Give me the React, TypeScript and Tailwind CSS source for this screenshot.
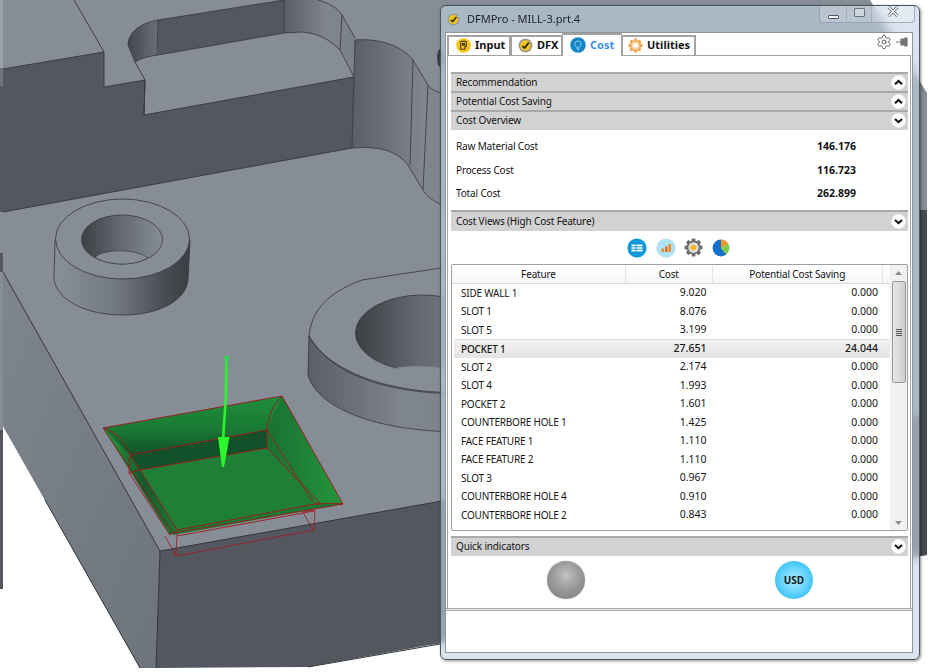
import React from "react";
import { Settings } from "lucide-react";

const rows: [string, string, string][] = [
  ["SIDE WALL 1", "9.020", "0.000"],
  ["SLOT 1", "8.076", "0.000"],
  ["SLOT 5", "3.199", "0.000"],
  ["POCKET 1", "27.651", "24.044"],
  ["SLOT 2", "2.174", "0.000"],
  ["SLOT 4", "1.993", "0.000"],
  ["POCKET 2", "1.601", "0.000"],
  ["COUNTERBORE HOLE 1", "1.425", "0.000"],
  ["FACE FEATURE 1", "1.110", "0.000"],
  ["FACE FEATURE 2", "1.110", "0.000"],
  ["SLOT 3", "0.967", "0.000"],
  ["COUNTERBORE HOLE 4", "0.910", "0.000"],
  ["COUNTERBORE HOLE 2", "0.843", "0.000"],
];

const RED = "#a3161c";
const EDGE = "#33373c";
const TOP = "#868d96";
const WALL = "#53575e";

function CadScene() {
  return (
    <svg className="absolute left-0 top-0 blur-[0.4px]" width={936} height={672} viewBox="0 0 936 672">
      <defs>
        <linearGradient id="cylA" x1="0" x2="1" y1="0" y2="0">
          <stop offset="0" stopColor="#8a9098" />
          <stop offset="0.45" stopColor="#737981" />
          <stop offset="0.8" stopColor="#4a4e54" />
          <stop offset="1" stopColor="#3a3d42" />
        </linearGradient>
        <linearGradient id="holeA" x1="0" x2="1" y1="0" y2="0">
          <stop offset="0" stopColor="#3c3f44" />
          <stop offset="0.45" stopColor="#62676e" />
          <stop offset="1" stopColor="#868d96" />
        </linearGradient>
        <linearGradient id="sl1" x1="0" x2="1" y1="0" y2="0">
          <stop offset="0" stopColor="#43464c" />
          <stop offset="1" stopColor="#6b7077" />
        </linearGradient>
        <linearGradient id="sl2" x1="0" x2="1" y1="0" y2="0">
          <stop offset="0" stopColor="#5a5e65" />
          <stop offset="0.6" stopColor="#80868e" />
          <stop offset="1" stopColor="#7b8189" />
        </linearGradient>
        <linearGradient id="leftF" x1="0" x2="1" y1="0" y2="1">
          <stop offset="0" stopColor="#7f858d" />
          <stop offset="1" stopColor="#6e747c" />
        </linearGradient>
        <linearGradient id="gTop" x1="0" x2="0" y1="0" y2="1">
          <stop offset="0" stopColor="#1f8e3a" />
          <stop offset="0.55" stopColor="#1a7a33" />
          <stop offset="1" stopColor="#125029" />
        </linearGradient>
        <linearGradient id="gLeft" x1="0" x2="1" y1="0" y2="0">
          <stop offset="0" stopColor="#2a9a42" />
          <stop offset="0.55" stopColor="#135a2b" />
          <stop offset="1" stopColor="#1a7a33" />
        </linearGradient>
        <linearGradient id="gRight" x1="0" x2="1" y1="0" y2="0">
          <stop offset="0" stopColor="#187032" />
          <stop offset="1" stopColor="#25953c" />
        </linearGradient>
      </defs>

      {/* body */}
      <polygon points="3,0 870,0 927,93 927,555 440,644 156,668 140,668 3,426" fill={TOP} />
      <polygon points="3,272 160,551 156,668 140,668 45,500 3,426" fill="url(#leftF)" />
      <polygon points="160,551 927,415 927,555 308,667 156,668" fill={WALL} />
      <path d="M3,272 L160,551 M160,551 L927,415 M160,551 L156,668 M45,500 L140,668 M308,667 L440,644" stroke={EDGE} strokeWidth="1" fill="none" />
      <rect x="0" y="0" width="3" height="68" fill="#9aa0a8" />
      <rect x="0" y="68" width="3" height="18" fill="#6f747b" />
      <rect x="0" y="86" width="3" height="126" fill={WALL} />
      <rect x="0" y="212" width="3" height="41" fill={TOP} />
      <rect x="0" y="253" width="3" height="19" fill={WALL} />
      <rect x="0" y="272" width="3" height="158" fill={TOP} />
      <rect x="0" y="430" width="3" height="159" fill={WALL} />
      <rect x="920" y="210" width="7" height="345" fill="#474b51" />

      {/* upper walls */}
      <polygon points="3,69 104,52 104,87 145,80 144,115 354,77 352,148 3,212" fill={WALL} />
      <path d="M3,69 L104,52 L104,87 L145,80 L144,115 L354,77 M3,212 L352,148 M74,0 L104,52 M145,80 L144,115 M145,80 L135,62" stroke={EDGE} strokeWidth="0.9" fill="none" />

      {/* slot */}
      <polygon points="158,20 284,0 284,33 158,55" fill={WALL} />
      <path d="M158,20 C140,23 128,33 128,45 L135,62 C141,58 150,56 158,55 Z" fill="url(#sl1)" />
      <path d="M284,0 L318,0 C330,3 338,9 342,15 L355,38 L354,77 L340,50 C330,40 318,33 302,32 L284,33 Z" fill="url(#sl2)" />
      <path d="M158,20 L284,0 M158,55 L284,33 M158,20 L157,55 M284,0 L284,33 M158,20 C140,23 128,33 128,45 L135,62 C141,58 150,56 158,55 M284,33 L302,32 C318,33 330,40 340,50 L354,77 M318,0 C330,3 338,9 342,15 L355,38 M342,15 L340,50" stroke={EDGE} strokeWidth="0.8" fill="none" />

      {/* big fillet wall */}
      <path d="M355,40 C380,38 402,46 413,60 L428,85 C432,90 436,93 470,100 L470,215 C436,205 428,198 423,190 L408,165 C396,150 378,146 352,148 Z" fill="url(#sl2)" />
      <path d="M355,40 L352,148 M355,40 C380,38 402,46 413,60 L428,85 C432,90 436,93 470,100 M352,148 C378,146 396,150 408,165 L423,190 C428,198 436,205 470,215 M413,60 L410,165 M428,85 L423,190" stroke={EDGE} strokeWidth="0.8" fill="none" />
      <ellipse cx="440" cy="58" rx="3" ry="9" fill="#3a3d42" />

      {/* boss 1 */}
      <path d="M55,240 L54,280 C58,300 85,315 123,315 C160,315 186,300 188,280 L190,240 Z" fill="url(#cylA)" stroke={EDGE} strokeWidth="0.8" />
      <ellipse cx="122.5" cy="239" rx="67" ry="40" fill={TOP} stroke={EDGE} strokeWidth="0.8" />
      <ellipse cx="122" cy="239.5" rx="40.5" ry="24.5" fill="url(#holeA)" stroke={EDGE} strokeWidth="0.8" />
      <path d="M95,257 C105,249 135,248 148,258 C138,263 130,264 122,264 C112,264 102,262 95,257 Z" fill={TOP} stroke={EDGE} strokeWidth="0.6" />

      {/* boss 2 */}
      <path d="M309,336 L308,375 C316,405 370,433 470,432 L470,392 C400,396 330,375 309,336 Z" fill="url(#sl2)" stroke={EDGE} strokeWidth="0.8" />
      <path d="M309,336 C312,305 335,290 362,280 L480,262" fill="none" stroke={EDGE} strokeWidth="0.8" />
      <path d="M309,336 C330,372 380,396 480,394" fill="none" stroke={EDGE} strokeWidth="0.8" />
      <ellipse cx="422" cy="333" rx="66.5" ry="38" fill="url(#holeA)" stroke={EDGE} strokeWidth="0.8" />
      <path d="M395,368 C410,365 430,366 460,370 C440,374 415,374 395,368 Z" fill={TOP} />

      {/* pocket */}
      <polygon points="103,428 282,396 343,504 173,535" fill="#1a7a33" />
      <polygon points="103,428 282,396 267,430 130,455" fill="url(#gTop)" />
      <polygon points="130,455 267,430 267,448 140,470" fill="#12502a" />
      <polygon points="140,470 267,448 320,503 177,530" fill="#1f7f36" />
      <polygon points="282,396 343,504 320,503 267,448 267,430" fill="url(#gRight)" />
      <polygon points="103,428 130,455 140,470 177,530 170,535" fill="url(#gLeft)" />
      <path
        d="M103,428 L282,396 L343,504 L173,533 L103,428 M103,428 C116,432 126,442 130,455 L267,430 C268,415 274,404 282,396 M130,455 L140,470 L267,448 L267,430 M140,470 L177,530 M130,455 L129,473 L140,470 M129,473 L170,535 M267,448 L320,503 M267,430 L313,502 M343,504 C332,503 322,503 316,505 M177,530 L320,503 M177,536 L314,511"
        fill="none"
        stroke={RED}
        strokeWidth="0.9"
      />
      <path
        d="M165,536 L176,556 L314,530 L315,510 L303,512 L313,530 M176,556 L177,532 M170,535 L177,530"
        fill="none"
        stroke={RED}
        strokeWidth="0.8"
      />
      <path d="M226.5,358 L226,395 L223,440" fill="none" stroke="#2bf52b" strokeWidth="2.6" />
      <polygon points="218,437 229.5,437 224,467 222,467" fill="#2bfb2b" />
      <polygon points="223.5,356 229.5,356 227.5,362 226,362" fill="#2bd94b" />
    </svg>
  );
}

function Chevron({ up }: { up?: boolean }) {
  return (
    <svg width="15" height="15" viewBox="0 0 15 15">
      <circle cx="7.5" cy="7.5" r="7.2" fill="#fff" />
      <path d={up ? "M4 9.2 L7.5 6 L11 9.2" : "M4 6 L7.5 9.2 L11 6"} fill="none" stroke="#111" strokeWidth="2.1" />
    </svg>
  );
}

function Section({ title, up, cls }: { title: string; up?: boolean; cls: string }) {
  return (
    <div className={`flex items-center justify-between bg-[#d2d2d2] border-t-2 border-[#a9a9a9] pb-[1px] pl-[5px] pr-[2px] text-[10px] tracking-[-0.15px] text-[#141414] ${cls}`}>
      <span>{title}</span>
      <Chevron up={up} />
    </div>
  );
}

function DfxIcon({ s = 15 }: { s?: number }) {
  return (
    <svg width={s} height={s} viewBox="0 0 16 16">
      <circle cx="8" cy="8" r="7.4" fill="#9b9b96" />
      <circle cx="8" cy="8" r="5.6" fill="#f2c41c" />
      <path d="M4.6 8.6 L7 10.6 L11.6 5" fill="none" stroke="#2d2a14" strokeWidth="1.9" />
    </svg>
  );
}

function InputIcon() {
  return (
    <svg width="15" height="15" viewBox="0 0 16 16">
      <circle cx="8" cy="8" r="7.8" fill="#f6c516" />
      <path d="M5 12 V4.6 Q5 3.6 6 3.6 H10 Q11 3.6 11 4.6 V9.4 H9.4 V12 Z M6.8 6 H9.2 V7.6 H6.8 Z" fill="none" stroke="#4b3c0a" strokeWidth="1.1" />
    </svg>
  );
}

function CostIcon() {
  return (
    <svg width="16" height="16" viewBox="0 0 16 16">
      <circle cx="8" cy="8" r="7.8" fill="#1587c6" />
      <path d="M6.4 10.2 C5.6 9.2 5 8.6 5 7 A3 3 0 0 1 11 7 C11 8.6 10.4 9.2 9.6 10.2 Z M6.6 11.4 H9.4 M7 12.8 H9" fill="none" stroke="#8fd0ee" strokeWidth="0.9" />
    </svg>
  );
}

function GearIcon({ size, outer, inner, hub }: { size: number; outer: string; inner: string; hub: string }) {
  const teeth = [0, 45, 90, 135, 180, 225, 270, 315];
  return (
    <svg width={size} height={size} viewBox="0 0 20 20">
      {teeth.map((a) => (
        <rect key={a} x="8" y="0.6" width="4" height="4" fill={outer} transform={`rotate(${a} 10 10)`} />
      ))}
      <circle cx="10" cy="10" r="7.4" fill={outer} />
      <circle cx="10" cy="10" r="5.4" fill={inner} />
      <circle cx="10" cy="10" r="3" fill={hub} />
    </svg>
  );
}

function Tab({ label, icon, active, cls }: { label: string; icon: React.ReactNode; active?: boolean; cls: string }) {
  return (
    <div
      className={`flex items-center gap-[4px] border-[#a3a3a3] bg-white pb-[1px] text-[11px] font-bold ${
        active ? "relative z-10 h-[23px] border-x border-t-2 text-[#3b8ee8] -mb-[1px]" : "h-[20px] border-2 border-b-0 text-[#141414]"
      } ${cls}`}
    >
      {icon}
      <span>{label}</span>
    </div>
  );
}

function WindowButtons() {
  return (
    <div className="flex h-[17px] w-[96px] rounded-b-[4px] border border-t-0 border-[#8597a8]/70 bg-white/20">
      <div className="flex w-[27px] items-center justify-center border-r border-[#8597a8]/50">
        <div className="mt-[6px] h-[4px] w-[11px] rounded-[1px] border border-[#4e5864] bg-white/90" />
      </div>
      <div className="flex w-[25px] items-center justify-center border-r border-[#8597a8]/50">
        <div className="-mt-[4px] h-[9px] w-[11px] rounded-[1px] border border-[#66727e] bg-white/30" />
      </div>
      <div className="flex flex-1 items-center justify-center">
        <svg width="12" height="11" viewBox="0 0 12 11" className="-mt-[5px]">
          <path d="M1.5 1 L10.5 10 M10.5 1 L1.5 10" stroke="#5f6b76" strokeWidth="3" />
          <path d="M1.5 1 L10.5 10 M10.5 1 L1.5 10" stroke="#fff" strokeWidth="1.4" />
        </svg>
      </div>
    </div>
  );
}

function CostViewIcons() {
  return (
    <div className="flex h-[33px] items-center pl-[176px]">
      <svg width="20" height="20" viewBox="0 0 20 20">
        <circle cx="10" cy="10" r="9.6" fill="#0c97da" />
        <path d="M4.5 6.5 H15.5 V13.5 H4.5 Z" fill="#fff" />
        <path d="M4 8.8 H16 M4 11.2 H16 M9 6 V14" stroke="#0c97da" strokeWidth="0.9" />
      </svg>
      <svg width="20" height="20" viewBox="0 0 20 20" className="ml-[9px]">
        <circle cx="10" cy="10" r="9.6" fill="#aee3f6" />
        <rect x="5.5" y="10.5" width="2.5" height="3.5" fill="#e78c2c" />
        <rect x="9" y="8.5" width="2.5" height="5.5" fill="#e26b22" />
        <rect x="12.4" y="6" width="2.5" height="8" fill="#ef8a1f" />
      </svg>
      <div className="ml-[8px]">
        <GearIcon size={19} outer="#6f6f6f" inner="#e2e2e2" hub="#f3b923" />
      </div>
      <svg width="18" height="20" viewBox="0 0 18 20" className="ml-[9px]">
        <circle cx="9" cy="10" r="8.4" fill="#d8ecf8" />
        <path d="M9 10 L9 1.6 A8.4 8.4 0 0 0 9 18.4 A8.4 8.4 0 0 0 14.5 16.3 Z" fill="#1670cc" />
        <path d="M9 10 L9 1.6 A8.4 8.4 0 0 1 16.2 5.7 Z" fill="#f09a2a" />
        <path d="M9 10 L16.2 5.7 A8.4 8.4 0 0 1 14.5 16.3 Z" fill="#7fd048" />
      </svg>
    </div>
  );
}

function Grid() {
  return (
    <div className="flex h-[267px] overflow-hidden rounded-[2px] border border-[#9aa0a6] bg-white text-[10.5px] text-[#141414]">
      <div className="w-[438px] overflow-hidden">
        <div className="flex h-[18.75px] items-center border-b border-[#d5dadf] bg-gradient-to-b from-white to-[#f4f6f8] pt-[1px] text-[10px] tracking-[-0.15px]">
          <div className="w-[174px] border-r border-[#dfe3e7] text-center leading-[17px]">Feature</div>
          <div className="w-[86.5px] border-r border-[#dfe3e7] text-center leading-[17px]">Cost</div>
          <div className="w-[170.5px] border-r border-[#dfe3e7] text-center leading-[17px]">Potential Cost Saving</div>
        </div>
        {rows.map(([name, cost, save]) => {
          const sel = name === "POCKET 1";
          return (
            <div
              key={name}
              className={`flex h-[18.5px] items-center ${
                sel ? "mx-[2px] -mr-0 rounded-[2px] border-t border-[#dcdcdc] bg-gradient-to-b from-[#f2f2f2] to-[#e4e4e4] font-medium" : ""
              }`}
            >
              <div className={`text-[10px] tracking-[-0.2px] ${sel ? "w-[172px] pl-[7px]" : "w-[174px] pl-[9px]"}`}>{name}</div>
              <div className="w-[86.5px] pr-[6px] text-right">{cost}</div>
              <div className="w-[170.5px] pr-[5px] text-right">{save}</div>
            </div>
          );
        })}
      </div>
      <div className="flex w-[17px] flex-col items-center bg-[#f1f1f1]">
        <div className="flex h-[16px] items-center justify-center">
          <svg width="7" height="4" viewBox="0 0 7 4"><path d="M3.5 0 L7 4 H0 Z" fill="#8a8a8a" /></svg>
        </div>
        <div className="flex h-[102px] w-[14px] flex-col items-center justify-center gap-[1px] rounded-[2px] border border-[#9a9a9a] bg-gradient-to-r from-[#e6e6e6] to-[#cfcfcf]">
          <div className="h-px w-[6px] bg-[#555]" />
          <div className="h-px w-[6px] bg-[#555]" />
          <div className="h-px w-[6px] bg-[#555]" />
          <div className="h-px w-[6px] bg-[#555]" />
        </div>
        <div className="flex-1" />
        <div className="flex h-[15px] items-center justify-center">
          <svg width="7" height="4" viewBox="0 0 7 4"><path d="M0 0 H7 L3.5 4 Z" fill="#8a8a8a" /></svg>
        </div>
      </div>
    </div>
  );
}

export default function App() {
  return (
    <div className="relative h-[672px] w-[936px] overflow-hidden bg-white font-['Noto_Sans',sans-serif]">
      <CadScene />
      {/* application window on the desktop */}
      <div className="absolute left-[440px] top-[5px] flex h-[655px] w-[480px] flex-col rounded-[6px] border border-[#4c5660] bg-[#c3d4e4]/60 px-[4px] shadow-[1px_1px_3px_rgba(0,0,0,0.45)] backdrop-blur-[5px] blur-[0.3px]">
        <div className="flex h-[26px] items-start justify-between">
          <div className="flex items-center gap-[7px] pl-[2px] pt-[6px] text-[11px] text-[#1d2229]">
            <DfxIcon s={13} />
            <span className="leading-[14px]">DFMPro - MILL-3.prt.4</span>
          </div>
          <WindowButtons />
        </div>

        <div className="flex h-[621px] w-[468px] flex-col border border-[#8e959c] bg-white">
          <div className="relative flex h-[22px] items-end pl-[1px]">
            <Tab label="Input" icon={<InputIcon />} cls="w-[64px] pl-[7px]" />
            <Tab label="DFX" icon={<DfxIcon />} cls="w-[53px] pl-[6px] -ml-px" />
            <Tab label="Cost" icon={<CostIcon />} active cls="w-[60px] pl-[7px] -ml-px" />
            <Tab label="Utilities" icon={<GearIcon size={15} outer="#f0a552" inner="#f7d9a8" hub="#ffffff" />} cls="w-[75px] pl-[5px] -ml-px" />
            <div className="absolute right-[2px] top-[1px] flex items-center gap-[4px]">
              <Settings size={16} strokeWidth={1.4} className="text-[#555]" />
              <svg width="14" height="12" viewBox="0 0 14 12">
                <path d="M0 6 H5 M5 3 H9 V2 H11 V10 H9 V9 H5 Z" fill="#6f7479" stroke="#6f7479" strokeWidth="1.2" />
              </svg>
            </div>
          </div>

          <div className="mx-[1px] flex h-[553px] flex-col border-x border-t border-[#a3a3a3] pl-[3px] pr-[2px] pt-[16px]">
            <Section title="Recommendation" up cls="h-[19px]" />
            <Section title="Potential Cost Saving" up cls="h-[19px]" />
            <Section title="Cost Overview" cls="h-[20px]" />
            <div className="pb-[5px] pl-[5px] pt-[4px] text-[10.5px] text-[#141414]">
              {[
                ["Raw Material Cost", "146.176", "h-[25px]"],
                ["Process Cost", "116.723", "h-[23px]"],
                ["Total Cost", "262.899", "h-[23px]"],
              ].map(([a, b, h]) => (
                <div key={a} className={`flex items-center ${h}`}>
                  <span className="w-[361px] text-[10px] tracking-[-0.15px]">{a}</span>
                  <span className="font-bold">{b}</span>
                </div>
              ))}
            </div>
            <Section title="Cost Views (High Cost Feature)" cls="h-[21px]" />
            <CostViewIcons />
            <Grid />
            <div className="h-[5px]" />
            <Section title="Quick indicators" cls="h-[20px]" />
            <div className="flex h-[51px] items-center pb-[3px] pl-[1px]">
              <div className="flex flex-1 justify-center">
                <div className="h-[38px] w-[38px] rounded-full bg-[radial-gradient(circle_at_50%_38%,#c4c4c4_0%,#9a9a9a_45%,#7c7c7c_100%)] shadow-[0_0_1px_#777]" />
              </div>
              <div className="flex flex-1 justify-center">
                <div className="flex h-[38px] w-[38px] items-center justify-center rounded-full bg-[radial-gradient(circle_at_50%_50%,#b4ecff_0%,#62d2fb_50%,#0bb2f4_100%)] text-[10px] font-bold text-[#0c1a24]">
                  USD
                </div>
              </div>
            </div>
          </div>
          <div className="h-[3px] border-y border-[#a8a8a8] bg-[#ececec]" />
          <div className="flex-1 bg-white" />
        </div>
      </div>
    </div>
  );
}
